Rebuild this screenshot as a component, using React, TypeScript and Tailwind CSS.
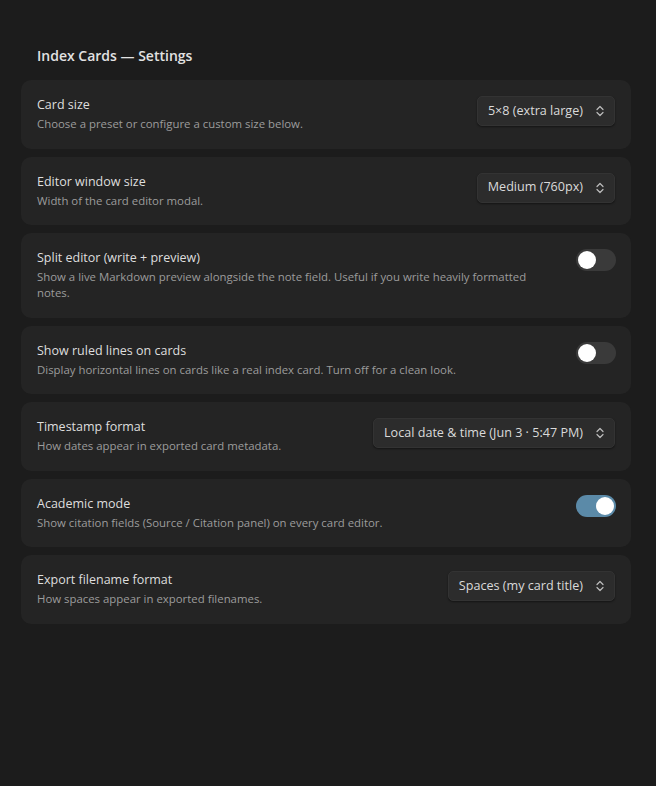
import React, { useState } from 'react';

type Row =
  | { kind: 'select'; label: string; desc: string; value: string }
  | { kind: 'toggle'; label: string; desc: string; on: boolean };

const ROWS: Row[] = [
  { kind: 'select', label: 'Card size', desc: 'Choose a preset or configure a custom size below.', value: '5×8 (extra large)' },
  { kind: 'select', label: 'Editor window size', desc: 'Width of the card editor modal.', value: 'Medium (760px)' },
  {
    kind: 'toggle',
    label: 'Split editor (write + preview)',
    desc: 'Show a live Markdown preview alongside the note field. Useful if you write heavily formatted notes.',
    on: false,
  },
  {
    kind: 'toggle',
    label: 'Show ruled lines on cards',
    desc: 'Display horizontal lines on cards like a real index card. Turn off for a clean look.',
    on: false,
  },
  { kind: 'select', label: 'Timestamp format', desc: 'How dates appear in exported card metadata.', value: 'Local date & time (Jun 3 · 5:47 PM)' },
  { kind: 'toggle', label: 'Academic mode', desc: 'Show citation fields (Source / Citation panel) on every card editor.', on: true },
  { kind: 'select', label: 'Export filename format', desc: 'How spaces appear in exported filenames.', value: 'Spaces (my card title)' },
];

const UpDown = () => (
  <svg width="8" height="12" viewBox="0 0 8 12" fill="none" stroke="currentColor" strokeWidth="1.2" strokeLinecap="round" strokeLinejoin="round">
    <path d="M1 4.5 4 1.5l3 3" />
    <path d="M1 7.5 4 10.5l3-3" />
  </svg>
);

const Toggle = ({ initial }: { initial: boolean }) => {
  const [on, setOn] = useState(initial);
  return (
    <button
      onClick={() => setOn(!on)}
      className={`shrink-0 w-10 h-[22px] mr-[-1px] rounded-full flex items-center px-[2px] ${on ? 'bg-[#5b8aa8] justify-end' : 'bg-[#3a3a3a] justify-start'}`}
    >
      <span className="w-[18px] h-[18px] rounded-full bg-white block" />
    </button>
  );
};

export default function App() {
  return (
    <div className="min-h-[786px] bg-[#1c1c1c] pt-[46px] pl-[21px] pr-[25px] font-['Open_Sans',sans-serif]">
      <h1 className="px-4 text-[14px] font-semibold text-[#e2e2e2] leading-5 mb-[14px]">Index Cards — Settings</h1>
      <div className="flex flex-col gap-2">
        {ROWS.map((r) => (
          <div key={r.label} className="bg-[#242424] rounded-[10px] px-4 pt-4 pb-[16.5px] flex items-start justify-between gap-6">
            <div className="flex-1 min-w-0">
              <div className="text-[12.5px] leading-[17px] text-[#dedede]">{r.label}</div>
              <div className="mt-[3px] text-[11.4px] leading-4 text-[#9c9c9c]">{r.desc}</div>
            </div>
            {r.kind === 'select' ? (
              <div className="shrink-0 h-[30px] flex items-center gap-[13px] pl-[10px] pr-[10px] rounded-[5px] bg-[#2c2c2c] border border-[#333] shadow-[0_1px_2px_rgba(0,0,0,0.45)] text-[12.6px] text-[#dadada]">
                <span>{r.value}</span>
                <span className="text-[#bdbdbd]">
                  <UpDown />
                </span>
              </div>
            ) : (
              <Toggle initial={r.on} />
            )}
          </div>
        ))}
      </div>
    </div>
  );
}
